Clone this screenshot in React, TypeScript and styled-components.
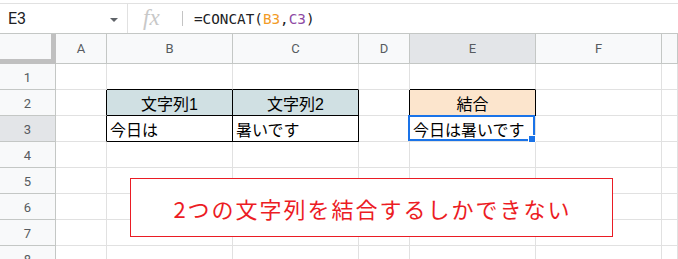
import React from "react";
import styled, { createGlobalStyle } from "styled-components";

const GlobalStyle = createGlobalStyle`
  html, body {
    margin: 0;
    padding: 0;
    background: #ffffff;
    overflow: hidden;
  }
`;

const COLS = ["A", "B", "C", "D", "E", "F", "G"];
const ROWS = [1, 2, 3, 4, 5, 6, 7, 8];

// cells that carry a solid black border
const BOXED = ["B2", "C2", "B3", "C3", "E2"];

const FILLS: Record<string, string> = {
  B2: "#d0e0e3",
  C2: "#d0e0e3",
  E2: "#fce5cd",
};

const VALUES: Record<string, { text: string; align: "left" | "center" }> = {
  B2: { text: "文字列1", align: "center" },
  C2: { text: "文字列2", align: "center" },
  E2: { text: "結合", align: "center" },
  B3: { text: "今日は", align: "left" },
  C3: { text: "暑いです", align: "left" },
  E3: { text: "今日は暑いです", align: "left" },
};

const isBoxed = (c: number, r: number) =>
  c >= 0 && c < COLS.length && BOXED.includes(`${COLS[c]}${r}`);

const Page = styled.div`
  width: 678px;
  height: 259px;
  overflow: hidden;
  font-family: Roboto, "Liberation Sans", Arial, sans-serif;
`;

const FormulaBar = styled.div`
  margin-top: 3px;
  height: 29px;
  border-top: 1px solid #e1e1e1;
  display: flex;
  align-items: center;
`;

const NameBox = styled.div`
  width: 128px;
  height: 100%;
  box-sizing: border-box;
  border-right: 1px solid #e1e1e1;
  display: flex;
  align-items: center;
  justify-content: space-between;
  padding: 0 9px 0 8px;
  font-size: 16px;
  color: #202124;
`;

const Caret = styled.span`
  width: 0;
  height: 0;
  border-left: 4px solid transparent;
  border-right: 4px solid transparent;
  border-top: 4px solid #5f6368;
  margin-top: 2px;
`;

const Fx = styled.span`
  width: 24px;
  margin-left: 15px;
  font-family: "Liberation Serif", serif;
  font-style: italic;
  font-size: 23px;
  color: #c8c8c8;
  line-height: 1;
  margin-top: -2px;
`;

const Divider = styled.span`
  width: 1px;
  height: 15px;
  background: #c4c4c4;
  margin: 0 11px 0 15px;
`;

const Formula = styled.div`
  font-family: "DejaVu Sans Mono", "Liberation Mono", monospace;
  font-size: 14.3px;
  color: #202124;
`;

const Ref = styled.span<{ $color: string }>`
  color: ${({ $color }) => $color};
`;

const Sheet = styled.div`
  position: relative;
  border-top: 1px solid #c4c7c5;
  display: grid;
  grid-template-columns: 56px 51px 126px 126px 51px 126px 126px 1fr;
  grid-template-rows: 30px repeat(8, 26px);
  height: 226px;
  overflow: hidden;
`;

const Corner = styled.div`
  box-sizing: border-box;
  background: #f8f9fa;
  border-right: 5px solid #c0c0c0;
  border-bottom: 5px solid #c0c0c0;
`;

const Header = styled.div<{ $active?: boolean; $row?: boolean }>`
  box-sizing: border-box;
  background: ${({ $active }) => ($active ? "#e3e5e8" : "#f8f9fa")};
  border-right: 1px solid #c4c7c5;
  border-bottom: 1px solid #c4c7c5;
  display: flex;
  align-items: center;
  justify-content: center;
  font-size: 13px;
  color: #575b60;
  padding-top: ${({ $row }) => ($row ? "1px" : "0")};
`;

const Cell = styled.div<{ $fill?: string; $right: string; $bottom: string; $align: string }>`
  position: relative;
  box-sizing: border-box;
  background: ${({ $fill }) => $fill || "#ffffff"};
  border-right: 1px solid ${({ $right }) => $right};
  border-bottom: 1px solid ${({ $bottom }) => $bottom};
  display: flex;
  align-items: center;
  justify-content: ${({ $align }) => ($align === "center" ? "center" : "flex-start")};
  padding: 1px 3px 0;
  font-family: "Liberation Sans", "Noto Sans CJK JP", sans-serif;
  font-size: 16px;
  color: #000000;
  white-space: nowrap;
`;

const Selection = styled.div`
  position: absolute;
  top: -1px;
  left: -2px;
  right: 0;
  bottom: 0;
  border: 2px solid #1a73e8;
  pointer-events: none;
`;

const Handle = styled.div`
  position: absolute;
  right: -3px;
  bottom: -4px;
  width: 6px;
  height: 6px;
  background: #1a73e8;
  border: 1px solid #ffffff;
`;

const Shape = styled.div`
  position: absolute;
  left: 130px;
  top: 144px;
  width: 483px;
  height: 59px;
  box-sizing: border-box;
  border: 1px solid #ea1c24;
  background: #ffffff;
  display: flex;
  align-items: center;
  justify-content: center;
  font-family: "Noto Sans CJK JP", sans-serif;
  font-size: 22px;
  letter-spacing: 2px;
  color: #ec1c24;
  padding-left: 2px;
`;

const GRID = "#e1e1e1";

const App = () => {
  return (
    <Page>
      <GlobalStyle />
      <FormulaBar>
        <NameBox>
          <span>E3</span>
          <Caret />
        </NameBox>
        <Fx>fx</Fx>
        <Divider />
        <Formula>
          =CONCAT(<Ref $color="#f29b26">B3</Ref>,<Ref $color="#8e4aa4">C3</Ref>)
        </Formula>
      </FormulaBar>
      <Sheet>
        <Corner />
        {COLS.map((c) => (
          <Header key={c} $active={c === "E"}>
            {/* column G is only a sliver at the edge, its letter is out of view */}
            {c === "G" ? null : c}
          </Header>
        ))}
        {ROWS.map((r) => (
          <React.Fragment key={r}>
            <Header $row $active={r === 3}>
              {r}
            </Header>
            {COLS.map((c, ci) => {
              const id = `${c}${r}`;
              const right = isBoxed(ci, r) || isBoxed(ci + 1, r) ? "#000000" : GRID;
              const bottom = isBoxed(ci, r) || isBoxed(ci, r + 1) ? "#000000" : GRID;
              const value = VALUES[id];
              return (
                <Cell
                  key={id}
                  $fill={FILLS[id]}
                  $right={right}
                  $bottom={bottom}
                  $align={value ? value.align : "left"}
                >
                  {value ? value.text : null}
                  {id === "E3" && (
                    <Selection>
                      <Handle />
                    </Selection>
                  )}
                </Cell>
              );
            })}
          </React.Fragment>
        ))}
        <Shape>2つの文字列を結合するしかできない</Shape>
      </Sheet>
    </Page>
  );
};

export default App;
